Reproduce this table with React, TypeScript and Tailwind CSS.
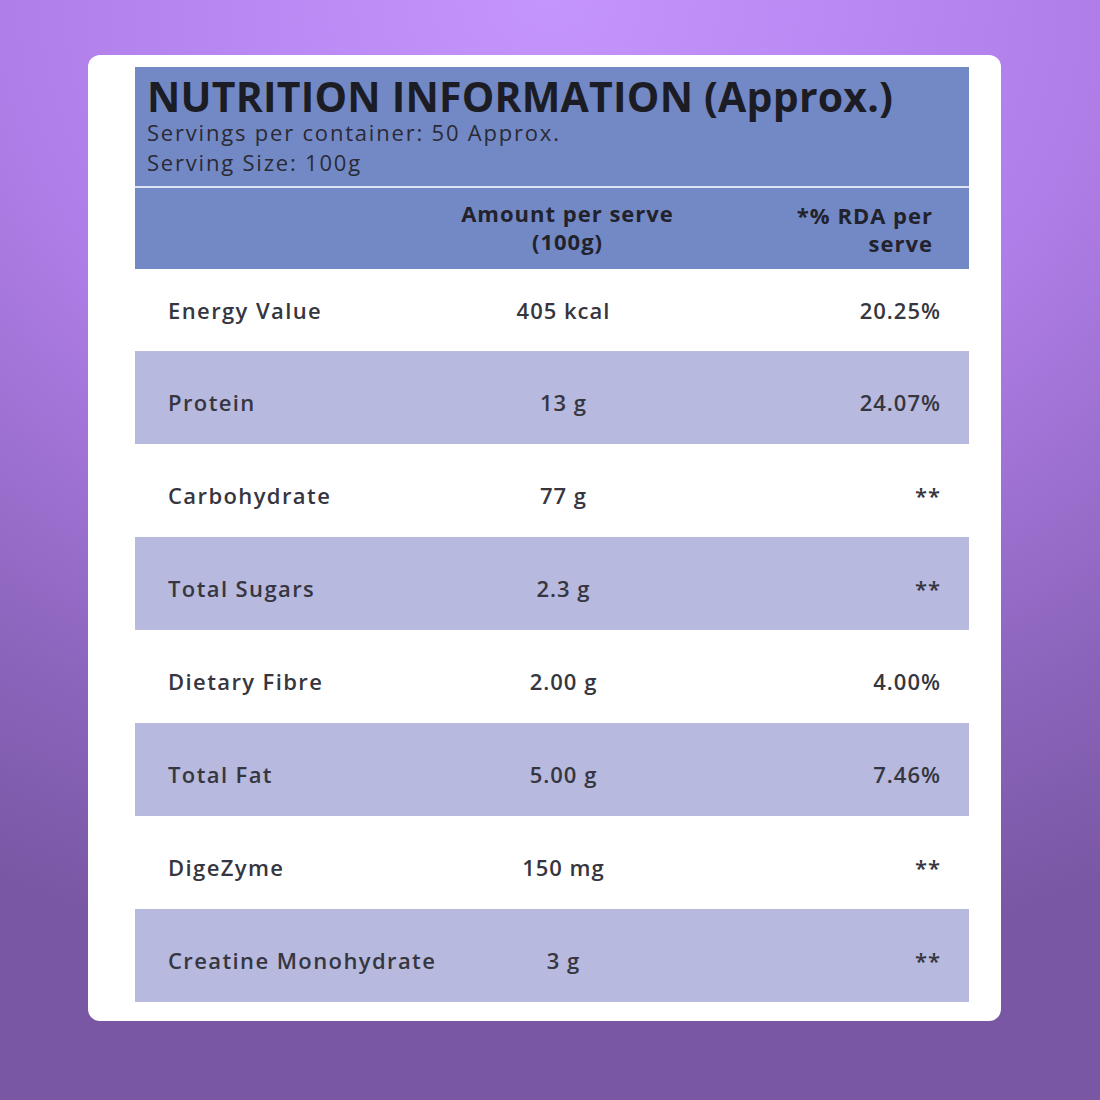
import React from "react";

const rows: { name: string; amount: string; rda: string; shade: boolean }[] = [
  { name: "Energy Value", amount: "405 kcal", rda: "20.25%", shade: false },
  { name: "Protein", amount: "13 g", rda: "24.07%", shade: true },
  { name: "Carbohydrate", amount: "77 g", rda: "**", shade: false },
  { name: "Total Sugars", amount: "2.3 g", rda: "**", shade: true },
  { name: "Dietary Fibre", amount: "2.00 g", rda: "4.00%", shade: false },
  { name: "Total Fat", amount: "5.00 g", rda: "7.46%", shade: true },
  { name: "DigeZyme", amount: "150 mg", rda: "**", shade: false },
  { name: "Creatine Monohydrate", amount: "3 g", rda: "**", shade: true },
];

export default function App() {
  return (
    <div
      className="w-[1100px] h-[1100px] bg-[radial-gradient(ellipse_110%_90%_at_50%_0%,#c595fe_0%,#b07ee8_45%,#8a64bb_80%,#7a57a4_100%)] pt-[55px] pl-[88px]"
      style={{ fontFamily: '"Open Sans", "Noto Sans", sans-serif' }}
    >
      <div className="w-[913px] h-[966px] bg-white rounded-[12px] pt-[12px] pl-[47px]">
        <div className="w-[834px] flex flex-col">
          <div className="bg-[#7389c5] h-[119px] pl-[12px] pt-[8px] flex flex-col">
            <div className="text-[41px] font-bold leading-[42px] text-[#1c1c24] tracking-[0.2px] whitespace-nowrap">
              NUTRITION INFORMATION (Approx.)
            </div>
            <div className="text-[22px] leading-[30px] text-[#2a2a35] tracking-[1.8px] whitespace-nowrap">
              Servings per container: 50 Approx.
            </div>
            <div className="text-[22px] leading-[30px] text-[#2a2a35] tracking-[1.8px] whitespace-nowrap">
              Serving Size: 100g
            </div>
          </div>
          <div className="h-[2px] bg-[#dfe4f4]" />
          <div className="bg-[#7389c5] h-[81px] grid grid-cols-[285px_295px_1fr] pt-[11px] pr-[36px]">
            <div />
            <div className="text-center text-[22px] font-bold leading-[28px] text-[#22222c] tracking-[1px]">
              <div>Amount per serve</div>
              <div>(100g)</div>
            </div>
            <div className="text-right text-[22px] font-bold leading-[28px] text-[#22222c] pt-[2px] tracking-[1px]">
              <div>*% RDA per</div>
              <div>serve</div>
            </div>
          </div>
          {rows.map((r, i) => (
            <div
              key={r.name}
              className={`grid grid-cols-[285px_295px_1fr] items-center pr-[28px] ${
                i === 0 ? "h-[82px]" : "h-[93px] pt-[10px]"
              } ${r.shade ? "bg-[#b7b9df]" : "bg-white"}`}
            >
              <div className="pl-[33px] text-[22px] font-semibold text-[#363640] tracking-[1.4px] whitespace-nowrap">
                {r.name}
              </div>
              <div className="text-center text-[22px] font-semibold text-[#363640] -ml-[8px] tracking-[1px] whitespace-nowrap">
                {r.amount}
              </div>
              <div className="text-right text-[22px] font-semibold text-[#363640] tracking-[1px] whitespace-nowrap">
                {r.rda}
              </div>
            </div>
          ))}
        </div>
      </div>
    </div>
  );
}
